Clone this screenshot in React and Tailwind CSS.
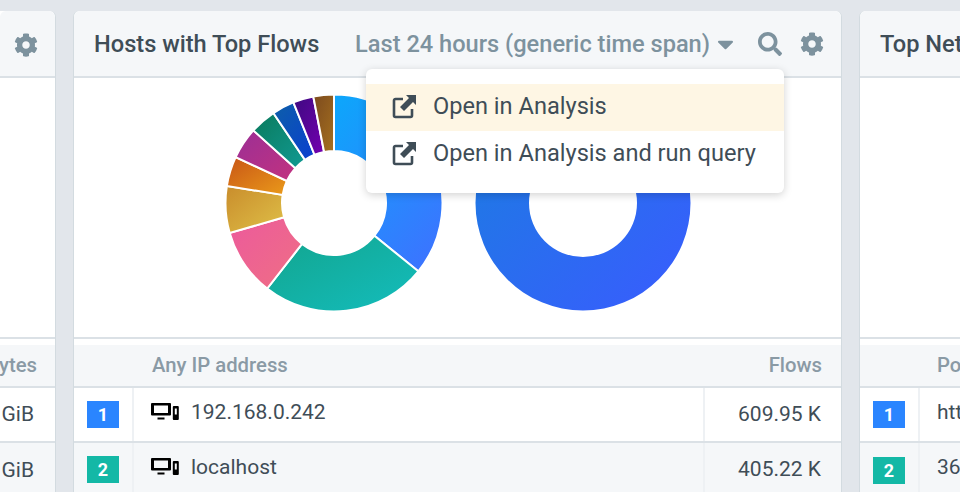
import React from 'react';
import { FaCog, FaSearch, FaCaretDown } from 'react-icons/fa';

const pt = (r, deg) => {
    const a = (deg * Math.PI) / 180;
    return [r * Math.sin(a), -r * Math.cos(a)];
};

function arc(r0, r1, from, to) {
    const [ax, ay] = pt(r1, from);
    const [bx, by] = pt(r1, to);
    const [cx, cy] = pt(r0, to);
    const [dx, dy] = pt(r0, from);
    const big = to - from > 180 ? 1 : 0;
    return `M${ax} ${ay}A${r1} ${r1} 0 ${big} 1 ${bx} ${by}L${cx} ${cy}A${r0} ${r0} 0 ${big} 0 ${dx} ${dy}Z`;
}

const slices = [
    { id: 'a', from: 0, to: 129, c: ['#0ea5fb', '#3b74ff'], x1: 0.1, y1: 0, x2: 0.8, y2: 1 },
    { id: 'b', from: 129, to: 218, c: ['#12a58e', '#14bdbd'], x1: 0, y1: 0, x2: 1, y2: 1 },
    { id: 'c', from: 218, to: 254, c: ['#ec5a9c', '#ef6f84'], x1: 0, y1: 0, x2: 1, y2: 1 },
    { id: 'd', from: 254, to: 279, c: ['#c98d2c', '#dfc048'], x1: 0, y1: 0, x2: 1, y2: 1 },
    { id: 'e', from: 279, to: 295, c: ['#c85516', '#ea9a1a'], x1: 0, y1: 0, x2: 1, y2: 1 },
    { id: 'f', from: 295, to: 312, c: ['#9b2f96', '#c2327f'], x1: 0, y1: 0, x2: 1, y2: 1 },
    { id: 'g', from: 312, to: 326, c: ['#0a7a5c', '#119a93'], x1: 0, y1: 0, x2: 1, y2: 1 },
    { id: 'h', from: 326, to: 338, c: ['#0d5fa8', '#0a3fd0'], x1: 0, y1: 0, x2: 1, y2: 1 },
    { id: 'i', from: 338, to: 349, c: ['#3d0a80', '#7400b0'], x1: 0, y1: 0, x2: 1, y2: 1 },
    { id: 'j', from: 349, to: 360, c: ['#7c4a1e', '#a5701f'], x1: 0, y1: 0, x2: 1, y2: 1 },
];

function Donut({ className }) {
    return (
        <svg viewBox="-110 -110 220 220" className={className}>
            <defs>
                {slices.map((s) => (
                    <linearGradient key={s.id} id={s.id} x1={s.x1} y1={s.y1} x2={s.x2} y2={s.y2}>
                        <stop offset="0" stopColor={s.c[0]} />
                        <stop offset="1" stopColor={s.c[1]} />
                    </linearGradient>
                ))}
            </defs>
            {slices.map((s) => (
                <path key={s.id} d={arc(52, 108.5, s.from, s.to)} fill={`url(#${s.id})`} stroke="#fff" strokeWidth="2" />
            ))}
        </svg>
    );
}

function SolidDonut({ className }) {
    return (
        <svg viewBox="-110 -110 220 220" className={className}>
            <defs>
                <linearGradient id="solid" x1="0" y1="0" x2="1" y2="1">
                    <stop offset="0" stopColor="#1a7ee0" />
                    <stop offset="1" stopColor="#3a5bff" />
                </linearGradient>
            </defs>
            <path fillRule="evenodd" fill="url(#solid)" d="M0 -107.5A107.5 107.5 0 1 1 0 107.5A107.5 107.5 0 1 1 0 -107.5ZM0 -54A54 54 0 1 0 0 54A54 54 0 1 0 0 -54Z" />
        </svg>
    );
}

function DeviceIcon() {
    return (
        <svg viewBox="0 0 28 17" className="w-[28px] h-[17px] shrink-0 text-black">
            <path fill="currentColor" fillRule="evenodd" d="M1 0h18a1 1 0 0 1 1 1v10.500a1 1 0 0 1-1 1H1a1 1 0 0 1-1-1V1a1 1 0 0 1 1-1Zm2 2.500v7.500h14V2.500ZM6.500 14.500h7V16.500h-7Z" />
            <path fill="currentColor" fillRule="evenodd" d="M22.800 3h4a1 1 0 0 1 1 1v12a1 1 0 0 1-1 1h-4a1 1 0 0 1-1-1V4a1 1 0 0 1 1-1Zm1 2.500v6h2v-6Z" />
        </svg>
    );
}

function LinkIcon() {
    return (
        <svg viewBox="0 0 24 24" className="w-[24px] h-[24px] shrink-0 text-[#3f4d57]" fill="none" stroke="currentColor" strokeWidth="2.6">
            <path d="M11 4H3.500A1.500 1.500 0 0 0 2 5.500v15A1.500 1.500 0 0 0 3.500 22h15a1.500 1.500 0 0 0 1.500-1.500V14" />
            <path fill="currentColor" stroke="none" d="M14 0h10v10l-3-3-9 9-4-4 9-9Z" />
        </svg>
    );
}

function Badge({ n, color }) {
    return (
        <span className={`w-[32px] h-[27px] flex items-center justify-center text-white font-bold text-[18px] ${color}`}>{n}</span>
    );
}

function Row({ n, color, icon, name, value, alt }) {
    return (
        <div className={`grid grid-cols-[60px_571px_1fr] h-[55px] border-b-2 border-[#dbe1e6] ${alt ? 'bg-[#f5f7f9]' : 'bg-white'}`}>
            <div className="flex items-center justify-center border-r-2 border-[#eef1f4]">
                <Badge n={n} color={color} />
            </div>
            <div className="flex items-start gap-3 pl-[17px] pt-[11px] border-r-2 border-[#eef1f4] text-[21px] text-[#3f4d57]">
                {icon && <span className="mt-[4px]"><DeviceIcon /></span>}
                <span className="leading-[26px]">{name}</span>
            </div>
            <div className="flex items-center justify-end pr-[20px] text-[21px] text-[#3f4d57] whitespace-nowrap">{value}</div>
        </div>
    );
}

function CardHead({ children }) {
    return (
        <div className="h-[67px] pt-[2px] shrink-0 bg-[#f5f7f9] border-b-2 border-[#dbe1e6] flex items-center rounded-t-md">{children}</div>
    );
}

function TableHead({ children, className }) {
    return (
        <div className={`h-[43px] shrink-0 bg-[#f5f7f9] border-b-2 border-[#dbe1e6] flex items-center text-[20.3px] font-medium text-[#8a9aa5] ${className}`}>
            {children}
        </div>
    );
}

function Chart({ children }) {
    return (
        <div className="h-[261px] shrink-0 border-b-2 border-[#dbe1e6] flex pl-[150px] pt-[15px] gap-[29px] bg-white mb-[6px]">{children}</div>
    );
}

function App() {
    return (
        <div className="w-[960px] h-[492px] overflow-hidden bg-[#e2e6eb] flex gap-[17px] pt-[11px] font-['Roboto',sans-serif]">
            {/* clipped panel on the left */}
            <div className="w-[56px] shrink-0 h-[520px] bg-white rounded-tr-md border-r border-[#d3dbe0] flex flex-col overflow-hidden">
                <CardHead>
                    <FaCog className="ml-[14px] w-[24px] h-[24px] text-[#7d929e]" />
                </CardHead>
                <Chart />
                <TableHead className="justify-end pr-[18px]">ytes</TableHead>
                <div className="h-[55px] shrink-0 bg-white border-b-2 border-[#dbe1e6] flex items-center justify-end pr-[21px] text-[21px] text-[#3f4d57]">GiB</div>
                <div className="h-[55px] shrink-0 bg-[#f5f7f9] flex items-center justify-end pr-[21px] text-[21px] text-[#3f4d57]">GiB</div>
            </div>

            {/* main panel */}
            <div className="relative w-[769px] shrink-0 h-[520px] bg-white rounded-t-md border-x border-t-0 border-[#d3dbe0] flex flex-col">
                <CardHead>
                    <h2 className="ml-[20px] text-[23.6px] font-medium text-[#3f4d57] whitespace-nowrap">Hosts with Top Flows</h2>
                    <div className="ml-auto mr-[17px] flex items-center text-[#7d929e]">
                        <span className="text-[23.6px] font-medium whitespace-nowrap">Last 24 hours (generic time span)</span>
                        <FaCaretDown className="ml-[7px] w-[17px] h-[26px]" />
                        <FaSearch className="ml-[24px] w-[24px] h-[24px]" />
                        <FaCog className="ml-[18px] w-[24px] h-[24px]" />
                    </div>
                </CardHead>
                <Chart>
                    <Donut className="w-[220px] h-[220px]" />
                    <SolidDonut className="w-[220px] h-[220px]" />
                </Chart>
                <TableHead className="justify-between pl-[78px] pr-[19px]">
                    <span>Any IP address</span>
                    <span>Flows</span>
                </TableHead>
                <Row n="1" color="bg-[#2a85ff]" icon name="192.168.0.242" value="609.95 K" />
                <Row n="2" color="bg-[#14b8a6]" icon name="localhost" value="405.22 K" alt />

                <div className="absolute left-[292px] top-[58px] w-[418px] h-[124px] bg-white rounded-md shadow-[0_2px_8px_rgba(0,0,0,0.18)] py-[15px] text-[23.6px] text-[#3f4d57]">
                    <div className="h-[47px] pb-[2px] bg-[#fef6e4] flex items-center gap-[17px] pl-[26px]">
                        <LinkIcon />
                        <span>Open in Analysis</span>
                    </div>
                    <div className="h-[46px] pb-[1px] flex items-center gap-[17px] pl-[26px]">
                        <LinkIcon />
                        <span>Open in Analysis and run query</span>
                    </div>
                </div>
            </div>

            {/* clipped panel on the right */}
            <div className="w-[300px] shrink-0 h-[520px] bg-white rounded-tl-md border-l border-[#d3dbe0] flex flex-col">
                <CardHead>
                    <h2 className="ml-[20px] text-[23.6px] font-medium text-[#3f4d57] whitespace-nowrap">Top Network Services</h2>
                </CardHead>
                <Chart />
                <TableHead className="pl-[77px]">Port</TableHead>
                <div className="grid grid-cols-[60px_1fr] h-[55px] border-b-2 border-[#dbe1e6]">
                    <div className="flex items-center justify-center border-r-2 border-[#eef1f4]"><Badge n="1" color="bg-[#2a85ff]" /></div>
                    <div className="pl-[17px] pt-[11px] text-[21px] leading-[26px] text-[#3f4d57]">https</div>
                </div>
                <div className="grid grid-cols-[60px_1fr] h-[55px] bg-[#f5f7f9]">
                    <div className="flex items-center justify-center border-r-2 border-[#eef1f4]"><Badge n="2" color="bg-[#14b8a6]" /></div>
                    <div className="pl-[17px] pt-[11px] text-[21px] leading-[26px] text-[#3f4d57]">3689</div>
                </div>
            </div>
        </div>
    );
}

export default App;
